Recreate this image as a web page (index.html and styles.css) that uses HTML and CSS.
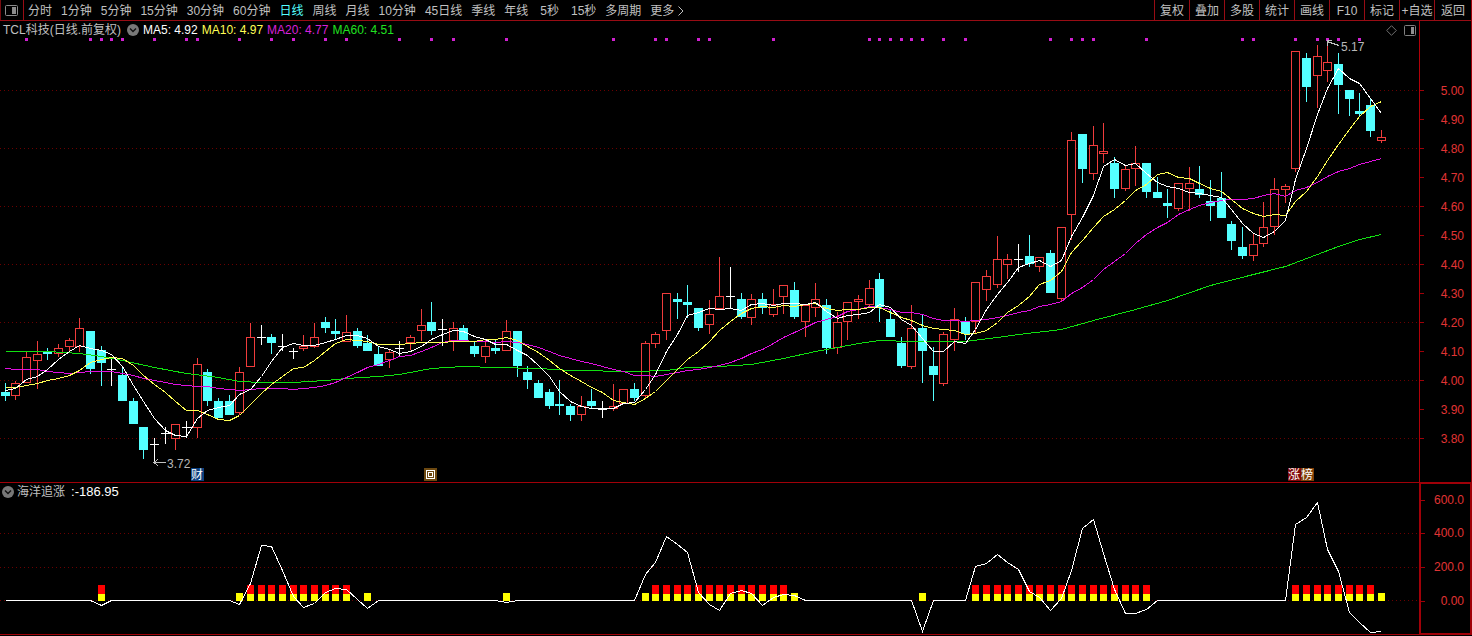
FILE: index.html
```html
<!DOCTYPE html>
<html lang="zh-CN">
<head>
<meta charset="utf-8">
<title>TCL科技 日线</title>
<link rel="stylesheet" href="styles.css">
</head>
<body>
<div class="app">
  <header class="toolbar">
    <button class="panel-toggle" aria-label="侧栏">
      <svg width="13" height="11" viewBox="0 0 13 11"><rect x=".5" y=".5" width="12" height="10" rx="1" fill="none" stroke="#8c8c8c"/><rect x="7" y="2" width="4" height="7" fill="#8c8c8c"/></svg>
    </button>
    <nav class="periods">
      <button>分时</button><button>1分钟</button><button>5分钟</button><button>15分钟</button><button>30分钟</button><button>60分钟</button><button class="active">日线</button><button>周线</button><button>月线</button><button>10分钟</button><button>45日线</button><button>季线</button><button>年线</button><button class="seconds">5秒</button><button>15秒</button><button>多周期</button><button class="more">更多<svg width="6" height="10" viewBox="0 0 6 10"><path d="M.5 .5L5 5L.5 9.5" fill="none" stroke="#c0c0c0"/></svg></button>
    </nav>
    <div class="tools">
      <button>复权</button><button>叠加</button><button>多股</button><button>统计</button><button>画线</button><button>F10</button><button>标记</button><button>+自选</button><button class="last">返回</button>
    </div>
  </header>

  <main class="pane price-pane">
    <section class="plot">
      <div class="info">
        <span class="name">TCL科技(日线.前复权)</span>
        <svg class="drop" width="12" height="12" viewBox="0 0 12 12"><circle cx="6" cy="6" r="6" fill="#787878"/><path d="M3 4.5L6 7.5L9 4.5" fill="none" stroke="#111" stroke-width="1.4"/></svg>
        <span class="ma5">MA5: 4.92</span><span class="ma10">MA10: 4.97</span><span class="ma20">MA20: 4.77</span><span class="ma60">MA60: 4.51</span>
        <span class="corner">
          <svg width="11" height="11" viewBox="0 0 11 11"><path d="M5.5 .7L10.3 5.5L5.5 10.3L.7 5.5Z" fill="none" stroke="#707070"/></svg>
          <svg width="13" height="11" viewBox="0 0 13 11"><rect x=".5" y=".5" width="11" height="10" rx="1" fill="none" stroke="#808080"/><rect x="7" y="2" width="3" height="7" fill="#909090"/></svg>
        </span>
      </div>
      <svg class="chart" id="price" height="443"></svg>
    </section>
    <ul class="axis">
      <li>5.00</li><li>4.90</li><li>4.80</li><li>4.70</li><li>4.60</li><li>4.50</li><li>4.40</li><li>4.30</li><li>4.20</li><li>4.10</li><li>4.00</li><li>3.90</li><li>3.80</li>
    </ul>
  </main>

  <section class="pane indicator-pane">
    <div class="plot">
      <div class="info">
        <svg class="drop" width="12" height="12" viewBox="0 0 12 12"><circle cx="6" cy="6" r="6" fill="#787878"/><path d="M3 4.5L6 7.5L9 4.5" fill="none" stroke="#111" stroke-width="1.4"/></svg>
        <span class="name">海洋追涨</span><span class="value">:-186.95</span>
      </div>
      <svg class="chart" id="indicator" height="134"></svg>
    </div>
    <ul class="axis">
      <li>600.0</li><li>400.0</li><li>200.0</li><li>0.00</li>
    </ul>
  </section>
</div>
<script src="chart.js"></script>
</body>
</html>
```
FILE: styles.css
```css
* { box-sizing: border-box; }

body {
  margin: 0;
  background: #000;
  color: #c0c0c0;
  font: 12px/16px "Liberation Sans", "Noto Sans CJK SC", sans-serif;
}

button {
  margin: 0;
  padding: 1px 0 0;
  border: 0;
  background: none;
  color: inherit;
  font: inherit;
  white-space: nowrap;
}

svg { display: block; }

.app {
  border-right: 1px solid #a00008;
  border-bottom: 1px solid #a00008;
}

.toolbar {
  display: flex;
  height: 21px;
  border-bottom: 1px solid #980c14;
}

.panel-toggle {
  width: 24px;
  padding: 0 0 0 4px;
  border-left: 1px solid #780c10;
  border-right: 1px solid #980c14;
}

.periods {
  display: flex;
  flex: 1;
  gap: 9px;
  padding-left: 4px;
}

.periods .active { color: #54ffff; }
.periods .seconds { padding: 1px 3px 0; }

.periods .more {
  display: flex;
  align-items: center;
  gap: 4px;
}

.tools { display: flex; }

.tools button {
  width: 35px;
  border-left: 1px solid #980c14;
}

.tools .last { width: 37px; }

.pane { display: flex; }

.plot {
  flex: 1;
  min-width: 0;
}

.info {
  display: flex;
  align-items: center;
  gap: 4px;
  height: 18px;
  padding-left: 3px;
  white-space: nowrap;
}

.price-pane .drop { margin-left: 2px; }

.ma5 { color: #fff; }
.ma10 { color: #ffff54; }
.ma20 { color: #d820d8; }
.ma60 { color: #20e020; }

.corner {
  display: flex;
  gap: 7px;
  margin-left: auto;
  padding-right: 2px;
}

.chart {
  width: 100%;
  overflow: hidden;
}

.price-pane .chart { overflow: visible; }

.axis {
  width: 52px;
  margin: 0;
  padding: 0;
  list-style: none;
  border-left: 1px solid #b00008;
  color: #e03434;
  text-align: right;
}

.axis li {
  display: flex;
  align-items: center;
  justify-content: space-between;
  padding-right: 7px;
}

.axis li::before {
  content: "";
  width: 4px;
  height: 1px;
  background: #a00008;
}

.price-pane .axis { padding-top: 55px; }
.price-pane .axis li { height: 29px; }

.indicator-pane { border-top: 1px solid #a00008; }

.indicator-pane .info {
  gap: 3px;
  height: 17px;
  padding-left: 2px;
}

.indicator-pane .value {
  margin-left: 3px;
  color: #fff;
  font-size: 13px;
}

.indicator-pane .axis {
  margin-top: -1px;
  border: 2px solid #a00008;
  border-width: 2px 1px 1px 2px;
}

.indicator-pane .axis li {
  height: 34px;
  padding-right: 6px;
}

.indicator-pane .axis li:first-child { height: 32px; }

.grid { stroke: #6a0000; stroke-dasharray: 1 3; }
.up { fill: #000; stroke: #f03c3c; }
.down { fill: #54ffff; stroke: #54ffff; }
.flat { stroke: #fff; }
.wick { fill: none; }
.line { fill: none; stroke: #fff; }
.line5 { stroke: #fff; }
.line10 { stroke: #ffff54; }
.line20 { stroke: #e010e0; }
.line60 { stroke: #10e010; }
.dot { fill: #d020d0; }
.low-bar { fill: #ffff00; }
.high-bar { fill: #ff0000; }
.note { fill: #b8b8b8; font-size: 12px; }
.arrow { fill: none; stroke: #c0c0c0; }
.tag-text { fill: #fff; font-size: 12px; }
```
FILE: chart.js
```js
// Candles: kind (R rising, C falling, W unchanged), high, body top, body bottom, low.
const candles = `C 383 392 396 401,R 381 383 396 400,R 352 357 383 383,R 341 354 361 389,C 348 352 354 360,R 344 348 354 357,
R 338 340 347 351,R 318 328 347 352,C 331 331 369 374,C 346 350 363 386,W 357 369 369 386,C 367 375 401 401,C 398 401 424 424,
C 427 427 450 459,W 438 444 444 464,W 427 433 433 444,R 424 424 439 450,W 421 427 427 438,R 358 364 428 438,C 369 372 401 406,
C 398 401 418 418,C 395 401 415 415,R 367 372 413 415,R 323 337 367 367,W 325 337 337 345,C 334 337 343 354,W 334 346 346 351,
W 348 351 351 359,R 335 346 349 351,R 323 337 347 348,C 317 322 328 333,C 319 331 334 339,R 315 332 342 342,C 328 331 346 348,
C 335 343 351 351,C 347 354 366 366,R 349 352 360 368,W 341 348 348 356,R 335 337 343 350,R 309 325 331 341,C 302 322 331 335,
W 319 329 329 346,R 322 328 341 351,C 325 328 340 342,C 341 346 354 357,R 340 346 357 363,C 340 348 351 354,R 320 331 351 351,
C 331 331 366 377,C 366 372 380 389,C 380 383 398 398,C 389 392 406 409,C 380 404 406 415,C 404 406 415 421,R 396 406 415 421,
C 389 401 406 408,W 401 409 409 418,R 384 406 409 411,R 389 389 404 404,C 383 389 398 401,R 341 343 396 398,R 332 334 344 348,
R 293 293 331 340,C 293 299 302 319,C 285 302 305 318,C 308 308 328 331,R 300 314 325 334,R 257 296 309 309,W 267 296 296 308,
C 293 299 317 319,R 294 299 318 325,C 293 299 308 314,R 289 304 315 317,R 285 285 297 314,C 282 290 317 319,R 305 305 322 337,
R 283 299 308 317,C 299 305 348 354,R 312 322 348 354,R 302 302 322 340,R 295 299 302 319,R 280 288 305 308,C 273 279 307 322,
C 310 319 337 337,C 337 343 366 368,R 305 328 367 369,C 314 328 351 383,C 347 366 375 401,R 332 334 384 386,R 308 319 340 351,
C 317 322 334 340,R 282 282 322 333,R 270 276 290 301,R 236 259 285 288,R 254 259 265 279,W 244 259 259 272,C 235 256 264 267,
R 257 257 267 272,C 250 253 293 293,R 227 227 299 301,R 132 140 215 240,C 134 134 169 183,R 126 145 174 180,R 123 151 154 163,
C 157 163 189 198,R 165 169 189 191,R 146 163 169 186,C 163 163 192 198,C 177 192 198 198,C 189 203 206 218,R 183 183 209 211,
R 167 183 189 211,C 166 189 195 198,C 180 201 206 221,C 172 198 218 218,C 221 224 241 250,C 227 247 256 259,R 234 244 256 261,
R 202 227 244 247,R 178 189 227 235,R 184 186 190 203,R 51 51 169 172,C 53 58 87 102,R 45 56 76 108,R 42 62 71 82,
C 53 64 85 114,C 90 90 99 116,C 93 111 114 116,C 98 105 131 137,R 130 137 141 143`.split(",").map(s => {
  const [kind, ...v] = s.trim().split(" ");
  return [kind, ...v.map(Number)];
});

const signals = [2,8,9,10,11,14,17,18,22,25,27,30,32,37,40,42,47,57,61,62,65,66,72,81,82,83,84,85,86,88,90,98,100,101,102,107,116,117,121,123,124,125,127];

// Averages ahead of the first full window.
const lead = {
  5: [390, 388, 379, 376],
  10: [387, 387, 385, 383, 380, 378, 375, 370, 362],
  20: [368, 369, 369, 369, 371, 372, 373, 372, 371, 371, 371, 373, 375, 378, 380, 382, 384, 385, 386]
};
const ma60 = [[0,351],[4,351],[7,353],[9,356],[11,360],[14,367],[17,373],[20,377],[22,381],[24,382],[27,382],[30,380],[32,378],[35,376],[37,374],[40,368],[43,366],[46,367],[50,368],[53,370],[59,371],[62,370],[64,367],[67,366],[70,364],[73,358],[76,351],[78,347],[80,343],[82,340],[85,341],[90,341],[93,337],[95,334],[99,329],[102,320],[106,309],[109,300],[113,285],[117,274],[120,266],[125,246],[127,239],[129,234]];
const wave = [[0,600],[8,600],[9,605],[10,600],[21,600],[22,604],[23,583],[24,545],[25,546],[26,570],[27,596],[28,607],[29,603],[30,592],[31,588],[32,589],[33,599],[34,608],[35,600],[46,600],[47,602],[48,600],[59,600],[60,574],[61,562],[62,536],[63,544],[64,552],[65,592],[66,604],[67,610],[68,593],[69,590],[70,593],[71,605],[72,597],[73,594],[74,595],[75,600],[85,600],[86,631],[87,600],[90,600],[91,566],[92,563],[93,554],[94,562],[95,569],[96,591],[97,597],[98,610],[99,598],[100,570],[101,528],[102,519],[103,553],[104,589],[105,613],[106,613],[107,609],[108,600],[120,600],[121,524],[122,517],[123,502],[124,549],[125,571],[126,612],[127,622],[128,632],[129,631]];
const lowOnly = [22, 34, 47, 60, 74, 86, 129];
const bothRanges = [[9, 9], [23, 32], [61, 73], [91, 107], [121, 128]];

const rect = (cls, x, y, w, h) => `<rect class="${cls}" x="${x}" y="${y}" width="${w}" height="${h}"/>`;
const path = (cls, d) => `<path class="${cls}" d="${d}"/>`;

function average(n) {
  const close = candles.map(c => c[0] === "C" ? c[3] : c[2]);
  return close.map((_, i) => [i, i < n - 1 ? lead[n][i] : close.slice(i - n + 1, i + 1).reduce((a, b) => a + b) / n]);
}

function draw() {
  const price = document.getElementById("price");
  const indicator = document.getElementById("indicator");
  const width = price.parentElement.clientWidth;
  const step = (width - 43) / 129;
  const at = i => Math.floor(5 + i * step);
  const trace = pts => "M" + pts.map(([i, y]) => `${at(i) + 0.5} ${Math.round(y) + 0.5}`).join("L");

  let out = "";
  for (let y = 90; y < 440; y += 58) out += path("grid", `M0 ${y}.5H${width}`);
  candles.forEach(([kind, high, top, bottom, low], i) => {
    const x = at(i);
    if (kind === "W") {
      out += path("flat", `M${x - 4} ${top}.5H${x + 5}M${x}.5 ${high}V${low}`);
    } else {
      const cls = kind === "R" ? "up" : "down";
      out += path(cls + " wick", `M${x}.5 ${high}V${top}M${x}.5 ${bottom}V${low}`);
      out += rect(cls, x - 3.5, top + 0.5, 8, Math.max(1, bottom - top - 1));
    }
  });
  out += path("line line60", trace(ma60));
  for (const n of [20, 10, 5]) out += path(`line line${n}`, trace(average(n)));
  signals.forEach(i => { out += rect("dot", at(i) - 1, 38, 3, 3); });

  const lowX = at(14), highX = at(124);
  out += path("arrow", `M${lowX + 12} 462.5H${lowX}M${lowX + 4} 459L${lowX} 462.5L${lowX + 4} 466`);
  out += `<text class="note" x="${lowX + 13}" y="468">3.72</text>`;
  out += path("arrow", `M${highX + 12} 45.5L${highX} 41.5M${highX + 5} 40.5H${highX}V46`);
  out += `<text class="note" x="${highX + 14}" y="51">5.17</text>`;
  const tag = (x, fill, label) => `<rect x="${x}" y="468" width="13" height="13" fill="${fill}"/><text class="tag-text" x="${x}" y="479">${label}</text>`;
  out += tag(at(18) - 6, "#0c4080", "财");
  const box = at(40) - 7;
  out += `<rect x="${box}" y="468" width="13" height="13" fill="#6c4810"/><path class="flat" fill="none" d="M${box + 2}.5 470.5h8v8h-8zM${box + 4}.5 472.5h4v4h-4z"/>`;
  out += tag(at(121) - 7, "#800808", "涨") + tag(at(121) + 6, "#804008", "榜");
  price.setAttribute("viewBox", `0 39 ${width} 443`);
  price.setAttribute("shape-rendering", "crispEdges");
  price.innerHTML = out;

  out = "";
  for (const y of [533, 567, 600]) out += path("grid", `M0 ${y}.5H${width}`);
  lowOnly.forEach(i => { out += rect("low-bar", at(i) - 3, 593, 7, 8); });
  bothRanges.forEach(([a, b]) => {
    for (let i = a; i <= b; i++) out += rect("high-bar", at(i) - 3, 585, 7, 9) + rect("low-bar", at(i) - 3, 594, 7, 7);
  });
  out += path("line", trace(wave));
  indicator.setAttribute("viewBox", `0 500 ${width} 134`);
  indicator.setAttribute("shape-rendering", "crispEdges");
  indicator.innerHTML = out;
}

draw();
window.addEventListener("resize", draw);
```
